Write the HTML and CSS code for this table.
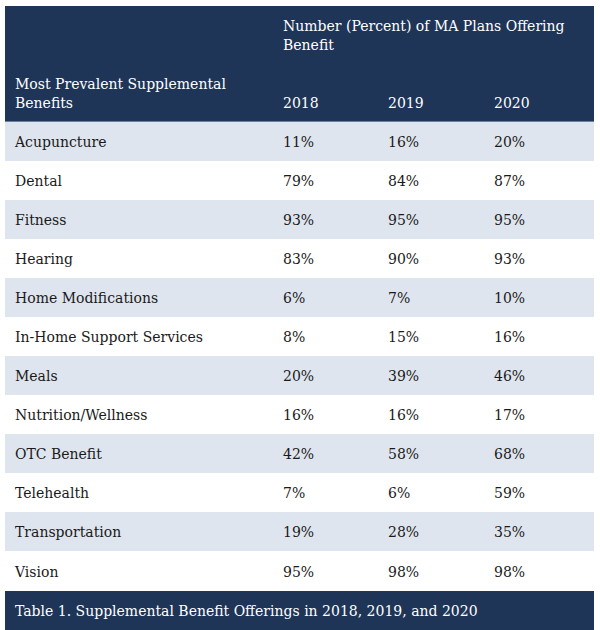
FILE: index.html
```html
<!DOCTYPE html>
<html>
<head>
<meta charset="utf-8">
<link rel="stylesheet" href="styles.css">
</head>
<body>
<table class="bt">
  <colgroup>
    <col class="w1"><col class="w2"><col class="w3"><col class="w4">
  </colgroup>
  <thead>
    <tr class="h1">
      <th class="c1" rowspan="2">Most Prevalent Supplemental Benefits</th>
      <th colspan="3" class="grp">Number (Percent) of MA Plans Offering Benefit</th>
    </tr>
    <tr class="h2">
      <th>2018</th>
      <th>2019</th>
      <th>2020</th>
    </tr>
  </thead>
  <tbody>
    <tr><td>Acupuncture</td><td>11%</td><td>16%</td><td>20%</td></tr>
    <tr><td>Dental</td><td>79%</td><td>84%</td><td>87%</td></tr>
    <tr><td>Fitness</td><td>93%</td><td>95%</td><td>95%</td></tr>
    <tr><td>Hearing</td><td>83%</td><td>90%</td><td>93%</td></tr>
    <tr><td>Home Modifications</td><td>6%</td><td>7%</td><td>10%</td></tr>
    <tr><td>In-Home Support Services</td><td>8%</td><td>15%</td><td>16%</td></tr>
    <tr><td>Meals</td><td>20%</td><td>39%</td><td>46%</td></tr>
    <tr><td>Nutrition/Wellness</td><td>16%</td><td>16%</td><td>17%</td></tr>
    <tr><td>OTC Benefit</td><td>42%</td><td>58%</td><td>68%</td></tr>
    <tr><td>Telehealth</td><td>7%</td><td>6%</td><td>59%</td></tr>
    <tr><td>Transportation</td><td>19%</td><td>28%</td><td>35%</td></tr>
    <tr class="last"><td>Vision</td><td>95%</td><td>98%</td><td>98%</td></tr>
  </tbody>
  <tfoot>
    <tr><td colspan="4" class="cap">Table 1. Supplemental Benefit Offerings in 2018, 2019, and 2020</td></tr>
  </tfoot>
</table>
</body>
</html>
```
FILE: styles.css
```css
html, body { margin: 0; padding: 0; background: #fff; }
body { padding: 6px 0 0 5px; }
.bt {
  border-collapse: collapse;
  width: 589px;
  table-layout: fixed;
  font-family: "DejaVu Serif", Georgia, serif;
  font-size: 14px;
  color: #1a1a1a;
}
.w1 { width: 268px; }
.w2 { width: 105px; }
.w3 { width: 106px; }
.w4 { width: 110px; }
.bt th {
  background: #1e3557;
  color: #fff;
  font-weight: normal;
  text-align: left;
  line-height: 19px;
  padding: 0 10px;
}
.bt .c1 { vertical-align: bottom; padding-bottom: 8px; }
.bt .grp { vertical-align: top; padding-top: 11px; height: 40px; }
.bt .h2 th { vertical-align: bottom; padding-bottom: 8px; height: 56px; }
.bt thead { border-bottom: 1px solid #6a7f9c; }
.bt td {
  height: 39px;
  padding: 0 10px;
  padding-top: 2px;
  box-sizing: border-box;
  vertical-align: middle;
}
.bt .last td { height: 40px; }
.bt tbody tr:nth-child(odd) td { background: #dfe5ee; }
.bt tbody tr:nth-child(even) td { background: #fff; }
.bt .cap {
  background: #1e3557;
  color: #fff;
  height: 39px;
  padding-top: 2px;
}
```
